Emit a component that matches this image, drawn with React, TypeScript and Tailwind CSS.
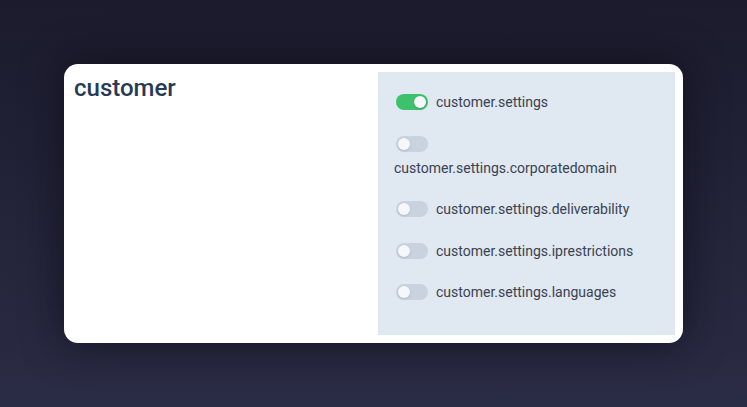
import React from "react";

const items = [
  { label: "customer.settings", on: true },
  { label: "customer.settings.corporatedomain", on: false },
  { label: "customer.settings.deliverability", on: false },
  { label: "customer.settings.iprestrictions", on: false },
  { label: "customer.settings.languages", on: false },
];

function Toggle({ on }: { on: boolean }) {
  return (
    <span
      className={
        "relative inline-flex h-4 w-8 shrink-0 items-center rounded-full ml-0.5 " +
        (on ? "bg-[#3ec16b] justify-end" : "bg-[#c9d3df] justify-start")
      }
    >
      <span className="mx-[2px] h-3 w-3 rounded-full bg-[#f5f7fa] shadow-sm" />
    </span>
  );
}

export default function App() {
  return (
    <div
      className="flex h-[407px] w-full items-center justify-center bg-gradient-to-b from-[#1b1b2d] to-[#2b2c45]"
      style={{ fontFamily: "Roboto, 'Noto Sans', sans-serif" }}
    >
      <div className="flex h-[279px] w-[619px] rounded-[14px] bg-white p-2 shadow-[0_0_40px_rgba(10,10,20,0.7)]">
        <div className="w-[306px] shrink-0 pl-0.5">
          <h1 className="text-2xl leading-8 font-medium text-[#283a55]">customer</h1>
        </div>
        <div className="flex-1 bg-[#e0e8f1] pl-[16px] pr-[18px] pt-[20px]">
          <div className="flex flex-col gap-[21.5px]">
            {items.map((it) => (
              <div key={it.label} className="flex flex-wrap items-center gap-x-2 gap-y-1">
                <span className="flex h-5 items-center">
                  <Toggle on={it.on} />
                </span>
                <span className="text-sm leading-5 text-[#3a4250]">{it.label}</span>
              </div>
            ))}
          </div>
        </div>
      </div>
    </div>
  );
}
